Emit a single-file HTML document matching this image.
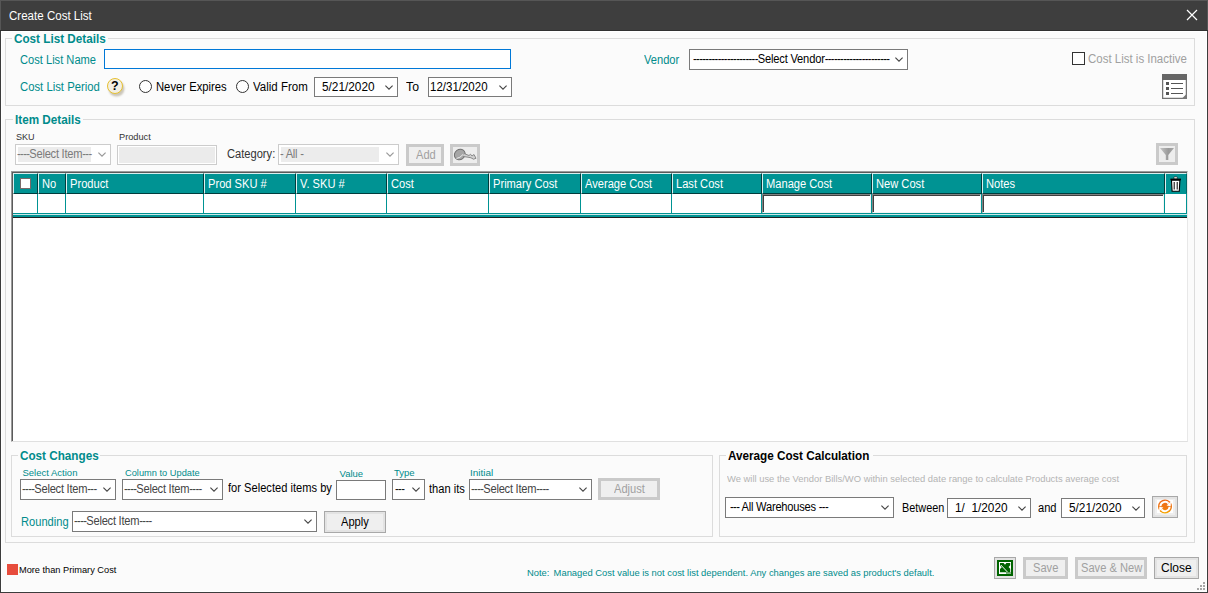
<!DOCTYPE html>
<html><head><meta charset="utf-8"><title>Create Cost List</title>
<style>
*{box-sizing:border-box;margin:0;padding:0}
html,body{width:1208px;height:593px;overflow:hidden;background:#fbfbfb;font-family:"Liberation Sans",sans-serif;font-size:12.5px;color:#000}
.a{position:absolute;white-space:nowrap;line-height:1}
.t{font-size:12.5px;transform:scaleX(.89);transform-origin:0 0}
.ts{font-size:9.5px;transform:scaleX(1);transform-origin:0 0}
.tb{font-size:13px;font-weight:bold;transform:scaleX(.9);transform-origin:0 0}
#win{position:absolute;left:0;top:0;width:1208px;height:593px;background:#fbfbfb;border:1px solid #3c3c3c;box-shadow:inset 0 0 0 1px #fff}
#tb{position:absolute;left:0;top:0;width:1208px;height:30px;background:#3e3e3e;box-shadow:inset 1px 1px 0 #565656,inset -1px 0 0 #565656}
.grp{position:absolute;border:1px solid #dcdcdc}
.gm{position:absolute;background:#fbfbfb;height:3px}
.teal{color:#008b8b}
.sel{position:absolute;background:#fff;border:1px solid #7a7a7a;height:21px;white-space:nowrap;overflow:hidden}
.sel span{position:absolute;left:1px;top:3px;letter-spacing:-.28px;line-height:1;font-size:12.5px;transform:scaleX(.89);transform-origin:0 0;white-space:pre}
.sel svg{position:absolute;right:4px;top:7px}
.sel.dis{border-color:#ccc;color:#7a7a7a}
.sel i{font-style:normal;letter-spacing:-.7px}
.btn{position:absolute;background:#efefef;border:1px solid #a8a8a8;box-shadow:inset 0 0 0 2px #e3e3e3;white-space:nowrap}
.btn.dis{box-shadow:none;background:#efefef;border:3px solid #cacaca;color:#a0a0a0}
.btn span{position:absolute;left:0;top:0;line-height:1;font-size:12.5px;transform:scaleX(.89);transform-origin:0 0}
.hc{position:absolute;top:173px;height:21px;background:#009393;border-left:1px solid #d8f0f0;border-top:1px solid #d8f0f0;border-right:1px solid #003c3c;border-bottom:1px solid #003c3c;color:#fff}
.hc span{position:absolute;left:3px;top:4px;line-height:1;font-size:12.5px;transform:scaleX(.89);transform-origin:0 0;white-space:nowrap}
.vl{position:absolute;top:194px;width:1px;height:19px;background:#009393}
.tx{position:absolute;top:194px;height:19px;background:#fff;border-left:1px solid #828282;border-top:1px solid #828282;border-right:1px solid #f4f4f4;border-bottom:1px solid #f4f4f4;box-shadow:inset 1px 1px 0 #404040}
</style></head><body>
<div id="win"></div>
<div id="tb"></div>
<div class="a" style="left:0;top:30px;width:1208px;height:1px;background:#303030"></div>
<div class="a" style="left:1px;top:31px;width:1205px;height:1px;background:#fff"></div>
<div class="a t" style="left:9px;top:10px;color:#fff;transform:scaleX(.924)">Create Cost List</div>
<svg class="a" style="left:1186px;top:9px" width="12" height="12" viewBox="0 0 12 12"><path d="M1 1 L11 11 M11 1 L1 11" stroke="#fff" stroke-width="1.2" fill="none"/></svg>

<!-- Cost List Details -->
<div class="grp" style="left:5px;top:38px;width:1190px;height:68px"></div>
<div class="gm" style="left:12px;top:37px;width:96px"></div>
<div class="a tb teal" style="left:14px;top:32px">Cost List Details</div>
<div class="a t teal" style="left:19.5px;top:54px">Cost List Name</div>
<div class="a" style="left:104px;top:49px;width:407px;height:20px;background:#fff;border:1px solid #0078d7"></div>
<div class="a t teal" style="left:19.5px;top:81px;transform:scaleX(.905)">Cost List Period</div>
<div class="a" style="left:107px;top:78px;width:16px;height:16px;border-radius:50%;border:1.5px solid #e6c030;background:#f3efe3;box-shadow:1.5px 2.5px 2px #cbc6ba"></div>
<div class="a" style="left:111px;top:80px;font-weight:bold;font-size:12.5px">?</div>
<div class="a" style="left:139px;top:80px;width:13px;height:13px;border-radius:50%;border:1px solid #333;background:#fff"></div>
<div class="a t" style="left:155.5px;top:81px;transform:scaleX(.9)">Never Expires</div>
<div class="a" style="left:236px;top:80px;width:13px;height:13px;border-radius:50%;border:1px solid #333;background:#fff"></div>
<div class="a t" style="left:253px;top:81px;transform:scaleX(.92)">Valid From</div>
<div class="sel" style="left:314px;top:77px;width:84px;height:20px"><span style="left:7px;top:3px;transform:scaleX(.945);letter-spacing:0">5/21/2020</span><svg width="8" height="6" viewBox="0 0 8 6"><path d="M0.4 0.6 L4 4.2 L7.6 0.6" stroke-width="1.1" stroke="#444" fill="none"/></svg></div>
<div class="a t" style="left:406px;top:81px;transform:scaleX(.98)">To</div>
<div class="sel" style="left:428px;top:77px;width:84px;height:20px"><span style="left:1px;top:3px;transform:scaleX(.92);letter-spacing:0">12/31/2020</span><svg width="8" height="6" viewBox="0 0 8 6"><path d="M0.4 0.6 L4 4.2 L7.6 0.6" stroke-width="1.1" stroke="#444" fill="none"/></svg></div>
<div class="a t teal" style="left:644px;top:54px">Vendor</div>
<div class="sel" style="left:689px;top:49px;width:219px"><span style="left:3px;top:3px;letter-spacing:-.2px"><i>---------------------</i>Select Vendor<i>---------------------</i></span><svg width="8" height="6" viewBox="0 0 8 6"><path d="M0.4 0.6 L4 4.2 L7.6 0.6" stroke-width="1.1" stroke="#444" fill="none"/></svg></div>
<div class="a" style="left:1072px;top:52px;width:13px;height:13px;border:1px solid #333;background:#fff"></div>
<div class="a t" style="left:1088px;top:53px;color:#a0a0a0;transform:scaleX(.918)">Cost List is Inactive</div>
<svg class="a" style="left:1162px;top:74px" width="25" height="25" viewBox="0 0 25 25"><rect x="0.6" y="0.6" width="23.8" height="23.8" fill="#fff" stroke="#727272" stroke-width="1.3"/><rect x="0" y="0" width="25" height="6" fill="#666"/><path d="M25 19.5 L25 25 L19.5 25 Z" fill="#777"/><rect x="4" y="8" width="3" height="3" fill="#555"/><rect x="4" y="13" width="3" height="3" fill="#555"/><rect x="4" y="18" width="3" height="3" fill="#555"/><path d="M9 9.5 H21 M9 14.5 H21 M9 19.5 H21" stroke="#555" stroke-width="1.1"/></svg>

<!-- Item Details -->
<div class="grp" style="left:5px;top:119px;width:1190px;height:424px"></div>
<div class="gm" style="left:13px;top:118px;width:70px"></div>
<div class="a tb teal" style="left:15px;top:113px">Item Details</div>
<div class="a ts" style="left:16px;top:132px;color:#333;transform:scaleX(.95)">SKU</div>
<div class="a ts" style="left:119px;top:132px;color:#333;transform:scaleX(.97)">Product</div>
<div class="sel dis" style="left:15px;top:144px;width:96px"><b style="position:absolute;left:2px;top:2px;width:73px;height:15px;background:#ececec"></b><span style="top:3px"><i>----</i>Select Item<i>---</i></span><svg width="8" height="6" viewBox="0 0 8 6"><path d="M0.4 0.6 L4 4.2 L7.6 0.6" stroke-width="1.2" stroke="#999" fill="none"/></svg></div>
<div class="a" style="left:117px;top:145px;width:100px;height:20px;background:#ebebeb;border:1px solid #ccc;box-shadow:inset 0 0 0 1px #fff"></div>
<div class="a t" style="left:227px;top:148px;color:#333">Category:</div>
<div class="sel dis" style="left:278px;top:144px;width:121px"><b style="position:absolute;left:2px;top:2px;width:98px;height:15px;background:#ececec"></b><span style="top:3px">- All -</span><svg width="8" height="6" viewBox="0 0 8 6"><path d="M0.4 0.6 L4 4.2 L7.6 0.6" stroke-width="1.2" stroke="#999" fill="none"/></svg></div>
<div class="btn dis" style="left:406px;top:144px;width:38px;height:22px"><span style="left:7px;top:2px">Add</span></div>
<div class="btn dis" style="left:450px;top:144px;width:30px;height:22px;background:#ededed"></div>
<svg class="a" style="left:450px;top:144px" width="30" height="22" viewBox="0 0 30 22"><ellipse cx="9.8" cy="10.6" rx="5.6" ry="5" transform="rotate(-35 9.6 10.6)" fill="#a6a6a6" stroke="#707070" stroke-width="1"/><path d="M6.5 14.5 Q10 14 13 10.5" stroke="#ededed" stroke-width="1" fill="none"/><path d="M14 9.5 L19 11.5 L20.5 10.2 L22 12 L24 10.5 L26 14.3 L23.5 15.2 L21 13.8 L18 13.2 L13 12.5" fill="#d0d0d0" stroke="#808080" stroke-width=".9"/></svg>
<div class="btn dis" style="left:1156px;top:143px;width:22px;height:22px;background:#ededed;border-width:3px"></div>
<svg class="a" style="left:1156px;top:143px" width="22" height="22" viewBox="0 0 22 22"><defs><linearGradient id="fg" x1="0" x2="1"><stop offset="0" stop-color="#c4c4c4"/><stop offset=".6" stop-color="#9a9a9a"/><stop offset="1" stop-color="#a8a8a8"/></linearGradient></defs><path d="M4 5 L18 5 L12.3 12 L12.3 17 L9.8 17 L9.8 12 Z" fill="url(#fg)"/></svg>

<!-- Grid -->
<div class="a" style="left:11px;top:171px;width:1177px;height:271px;background:#fff;border-left:1px solid #9a9a9a;border-top:1px solid #9a9a9a;border-right:1px solid #e8e8e8;border-bottom:1px solid #e0e0e0"></div>
<div class="a" style="left:12px;top:172px;width:1175px;height:269px;border-left:1px solid #5a5a5a;border-top:1px solid #5a5a5a"></div>
<div class="hc" style="left:13px;width:25px"></div>
<div class="a" style="left:20px;top:178px;width:11px;height:11px;background:#fff;border:1px solid #7a6a6a"></div>
<div class="hc" style="left:38px;width:28px"><span>No</span></div>
<div class="hc" style="left:66px;width:138px"><span>Product</span></div>
<div class="hc" style="left:204px;width:92px"><span>Prod SKU #</span></div>
<div class="hc" style="left:296px;width:91px"><span>V. SKU #</span></div>
<div class="hc" style="left:387px;width:102px"><span>Cost</span></div>
<div class="hc" style="left:489px;width:92px"><span>Primary Cost</span></div>
<div class="hc" style="left:581px;width:91px"><span>Average Cost</span></div>
<div class="hc" style="left:672px;width:90px"><span>Last Cost</span></div>
<div class="hc" style="left:762px;width:110px"><span>Manage Cost</span></div>
<div class="hc" style="left:872px;width:110px"><span>New Cost</span></div>
<div class="hc" style="left:982px;width:183px"><span>Notes</span></div>
<div class="hc" style="left:1165px;width:22px;border-right-color:#006868;border-bottom-color:#009393"></div>
<svg class="a" style="left:1170px;top:176px" width="12" height="17" viewBox="0 0 12 17"><rect x="3.8" y="0.8" width="3.6" height="2.2" rx="1" fill="#fff" stroke="#000" stroke-width=".6"/><rect x="0.4" y="2.6" width="10.6" height="1.7" fill="#000"/><path d="M1.5 4.3 L2.1 15.2 L9.3 15.2 L9.9 4.3 Z" fill="#fff" stroke="#000" stroke-width="1.1"/><path d="M4.2 6 V13.5 M7.2 6 V13.5" stroke="#000" stroke-width="1"/></svg>
<div class="vl" style="left:37px"></div><div class="vl" style="left:65px"></div><div class="vl" style="left:203px"></div><div class="vl" style="left:295px"></div><div class="vl" style="left:386px"></div><div class="vl" style="left:488px"></div><div class="vl" style="left:580px"></div><div class="vl" style="left:671px"></div><div class="vl" style="left:761px"></div><div class="vl" style="left:871px"></div><div class="vl" style="left:981px"></div><div class="vl" style="left:1164px"></div><div class="vl" style="left:1186px"></div>
<div class="tx" style="left:762px;width:109px"></div>
<div class="tx" style="left:872px;width:109px"></div>
<div class="tx" style="left:982px;width:182px"></div>
<div class="a" style="left:13px;top:213px;width:1174px;height:1px;background:#009393"></div>
<div class="a" style="left:13px;top:214px;width:1174px;height:1px;background:#c8e8e8"></div>
<div class="a" style="left:13px;top:215px;width:1174px;height:2px;background:#009393"></div>
<div class="a" style="left:13px;top:217px;width:1174px;height:1px;background:#202020"></div>

<!-- Cost Changes -->
<div class="grp" style="left:11px;top:455px;width:702px;height:82px"></div>
<div class="gm" style="left:18px;top:454px;width:82px"></div>
<div class="a tb teal" style="left:20px;top:449px">Cost Changes</div>
<div class="a ts teal" style="left:22.5px;top:468px">Select Action</div>
<div class="a ts teal" style="left:124.5px;top:468px;transform:scaleX(.975)">Column to Update</div>
<div class="a ts teal" style="left:339.5px;top:469px">Value</div>
<div class="a ts teal" style="left:394px;top:468px">Type</div>
<div class="a ts teal" style="left:469.5px;top:468px;transform:scaleX(1.05)">Initial</div>
<div class="sel" style="left:20px;top:479px;width:96px"><span style="color:#444"><i>----</i>Select Item<i>---</i></span><svg width="8" height="6" viewBox="0 0 8 6"><path d="M0.4 0.6 L4 4.2 L7.6 0.6" stroke-width="1.1" stroke="#444" fill="none"/></svg></div>
<div class="sel" style="left:122px;top:479px;width:101px"><span style="color:#444"><i>----</i>Select Item<i>----</i></span><svg width="8" height="6" viewBox="0 0 8 6"><path d="M0.4 0.6 L4 4.2 L7.6 0.6" stroke-width="1.1" stroke="#444" fill="none"/></svg></div>
<div class="a t" style="left:228px;top:482px">for Selected items by</div>
<div class="a" style="left:336px;top:480px;width:50px;height:20px;background:#fff;border:1px solid #7a7a7a"></div>
<div class="sel" style="left:392px;top:479px;width:33px"><span style="color:#111;left:2px"><i>---</i></span><svg width="8" height="6" viewBox="0 0 8 6"><path d="M0.4 0.6 L4 4.2 L7.6 0.6" stroke-width="1.1" stroke="#444" fill="none"/></svg></div>
<div class="a t" style="left:429px;top:483px">than its</div>
<div class="sel" style="left:469px;top:479px;width:123px"><span style="color:#444"><i>----</i>Select Item<i>----</i></span><svg width="8" height="6" viewBox="0 0 8 6"><path d="M0.4 0.6 L4 4.2 L7.6 0.6" stroke-width="1.1" stroke="#444" fill="none"/></svg></div>
<div class="btn dis" style="left:598px;top:478px;width:62px;height:22px"><span style="left:13px;top:2px">Adjust</span></div>
<div class="a t teal" style="left:21px;top:516px">Rounding</div>
<div class="sel" style="left:72px;top:511px;width:245px"><span style="color:#444"><i>----</i>Select Item<i>----</i></span><svg width="8" height="6" viewBox="0 0 8 6"><path d="M0.4 0.6 L4 4.2 L7.6 0.6" stroke-width="1.1" stroke="#444" fill="none"/></svg></div>
<div class="btn" style="left:324px;top:511px;width:62px;height:22px"><span style="left:16px;top:4px">Apply</span></div>

<!-- Average Cost Calculation -->
<div class="grp" style="left:719px;top:455px;width:468px;height:82px"></div>
<div class="gm" style="left:726px;top:454px;width:147px"></div>
<div class="a tb" style="left:728px;top:449px">Average Cost Calculation</div>
<div class="a ts" style="left:727px;top:474px;color:#b4b4b4;transform:scaleX(.989)">We will use the Vendor Bills/WO within selected date range to calculate Products average cost</div>
<div class="sel" style="left:725px;top:497px;width:169px"><span style="left:4px;letter-spacing:-.25px"><i>---</i> All Warehouses <i>---</i></span><svg width="8" height="6" viewBox="0 0 8 6"><path d="M0.4 0.6 L4 4.2 L7.6 0.6" stroke-width="1.1" stroke="#444" fill="none"/></svg></div>
<div class="a t" style="left:902px;top:502px;transform:scaleX(.87)">Between</div>
<div class="sel" style="left:947px;top:498px;width:84px;height:20px"><span style="left:7px;top:3px;transform:scaleX(.945);letter-spacing:0">1/  1/2020</span><svg width="8" height="6" viewBox="0 0 8 6"><path d="M0.4 0.6 L4 4.2 L7.6 0.6" stroke-width="1.1" stroke="#444" fill="none"/></svg></div>
<div class="a t" style="left:1038px;top:502px">and</div>
<div class="sel" style="left:1061px;top:498px;width:84px;height:20px"><span style="left:7px;top:3px;transform:scaleX(.945);letter-spacing:0">5/21/2020</span><svg width="8" height="6" viewBox="0 0 8 6"><path d="M0.4 0.6 L4 4.2 L7.6 0.6" stroke-width="1.1" stroke="#444" fill="none"/></svg></div>
<div class="btn" style="left:1152px;top:496px;width:26px;height:22px"></div>
<svg class="a" style="left:1157px;top:499px" width="16" height="15" viewBox="0 0 16 15"><defs><linearGradient id="og" x1="0" y1="0" x2="0" y2="1"><stop offset="0" stop-color="#ee6a1c"/><stop offset=".7" stop-color="#f07c10"/><stop offset="1" stop-color="#f8b000"/></linearGradient></defs><rect x="0" y="1" width="16" height="13" fill="#fff"/><circle cx="8" cy="7.5" r="7" fill="url(#og)"/><path d="M3.4 7.3 A4.6 4.6 0 0 1 11.6 4.6" stroke="#fff" stroke-width="2" fill="none"/><path d="M12.6 7.7 A4.6 4.6 0 0 1 4.4 10.4" stroke="#fff" stroke-width="2" fill="none"/><path d="M9.6 6.6 L13.9 2.6 L13.7 7.2 Z M6.4 8.4 L2.1 12.4 L2.3 7.8 Z" fill="#fff"/></svg>

<!-- Footer -->
<div class="a" style="left:7px;top:564px;width:11px;height:11px;background:#e74c3c"></div>
<div class="a ts" style="left:19px;top:565px;transform:scaleX(.97)">More than Primary Cost</div>
<div class="a ts teal" style="left:527px;top:568px;white-space:pre;transform:scaleX(.987)">Note:<span style="letter-spacing:1.6px"> </span>Managed Cost value is not cost list dependent. Any changes are saved as product's default.</div>
<div class="btn" style="left:994px;top:557px;width:22px;height:22px;background:#e8e3e8;border-color:#a8a8a8"></div>
<svg class="a" style="left:997px;top:560px" width="16" height="16" viewBox="0 0 16 16"><rect width="16" height="16" fill="#006400"/><rect x="2" y="2" width="12" height="12" fill="#fff"/><path d="M3 3 H6.6 L8 4.8 L9.4 3 H13.2 V5.2 L11.6 7 L13.2 8.8 V12.2 H3 V9 L4.8 7.2 L3 5.6 Z" fill="#006400"/><path d="M3.8 5 L10.6 12.2" stroke="#fff" stroke-width="1"/><path d="M9 13 H14" stroke="#006400" stroke-width="1"/></svg>
<div class="btn dis" style="left:1023px;top:557px;width:45px;height:22px"><span style="left:7px;top:2px">Save</span></div>
<div class="btn dis" style="left:1075px;top:557px;width:72px;height:22px"><span style="left:3px;top:2px">Save &amp; New</span></div>
<div class="btn" style="left:1154px;top:557px;width:45px;height:22px"><span style="left:6px;top:4px;transform:scaleX(.96)">Close</span></div>
<svg class="a" style="left:1197px;top:582px" width="8" height="8" viewBox="0 0 8 8" fill="#a6a6a6"><rect x="6" y="0" width="2" height="2"/><rect x="3" y="3" width="2" height="2"/><rect x="6" y="3" width="2" height="2"/><rect x="0" y="6" width="2" height="2"/><rect x="3" y="6" width="2" height="2"/><rect x="6" y="6" width="2" height="2"/></svg>
</body></html>
